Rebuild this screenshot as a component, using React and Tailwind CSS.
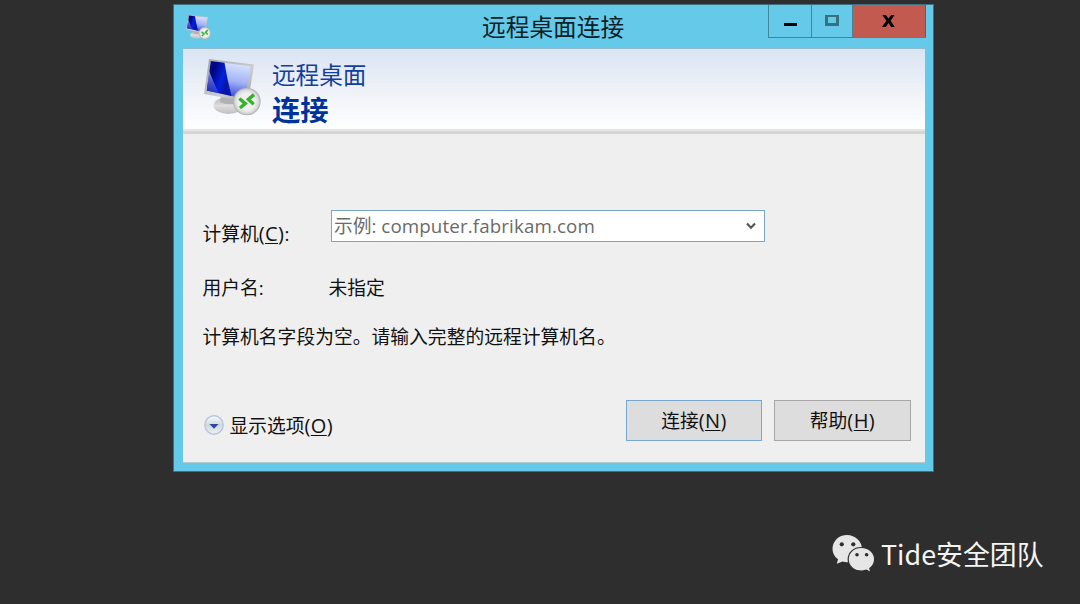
import React from "react";

function ComputerIcon({ className }) {
  return (
    <svg viewBox="0 0 57 57" className={className}>
      <defs>
        <linearGradient id="screenDark" x1="0" y1="0" x2="0.9" y2="0.5">
          <stop offset="0" stopColor="#0a1290" />
          <stop offset="0.35" stopColor="#00047e" />
          <stop offset="0.75" stopColor="#0420e0" />
          <stop offset="1" stopColor="#0616a8" />
        </linearGradient>
        <linearGradient id="screenLight" x1="0.6" y1="0" x2="0.4" y2="1">
          <stop offset="0" stopColor="#dbe5ff" />
          <stop offset="0.5" stopColor="#a3b4f6" />
          <stop offset="1" stopColor="#2536d4" />
        </linearGradient>
        <linearGradient id="glare" x1="0" y1="0" x2="0" y2="1">
          <stop offset="0" stopColor="#aab6f8" stopOpacity="0.8" />
          <stop offset="1" stopColor="#3b4ad8" stopOpacity="0.5" />
        </linearGradient>
        <linearGradient id="frame" x1="0" y1="0" x2="1" y2="1">
          <stop offset="0" stopColor="#a4a6aa" />
          <stop offset="0.6" stopColor="#cdced2" />
          <stop offset="1" stopColor="#8f9195" />
        </linearGradient>
        <linearGradient id="base" x1="0" y1="0" x2="0" y2="1">
          <stop offset="0" stopColor="#b3b3b5" />
          <stop offset="0.5" stopColor="#dededf" />
          <stop offset="1" stopColor="#c0c0c2" />
        </linearGradient>
        <radialGradient id="badge">
          <stop offset="0.6" stopColor="#f0f0f0" />
          <stop offset="0.85" stopColor="#d8d8d8" />
          <stop offset="1" stopColor="#aaaaaa" />
        </radialGradient>
      </defs>
      <ellipse cx="24.5" cy="46.5" rx="15" ry="8.5" fill="url(#base)" />
      <path d="M17 37L31 40L32 44Q24 47 16 43Z" fill="#b0b1b4" />
      <path d="M5 0L50 5.5L44 43L0 35Z" fill="url(#frame)" />
      <path d="M6.8 2L46.6 7.2L41.3 40L2.8 31.5Z" fill="url(#screenLight)" />
      <path d="M6.8 2L20.5 3.8Q23 20 27.5 37L2.8 31.5Z" fill="url(#screenDark)" />
      <path d="M5.2 12Q9 22 14.5 34.1L2.8 31.5Z" fill="url(#glare)" />
      <circle cx="42.8" cy="42.5" r="13.8" fill="url(#badge)" />
      <path
        d="M35.4 39.5L41.2 44.6L36 49M50 35.6L44.4 40.4L49.7 45.2"
        fill="none"
        stroke="#32b526"
        strokeWidth="3.4"
      />
    </svg>
  );
}

function WeChatIcon() {
  return (
    <svg viewBox="0 0 43 38" className="mt-0.5 h-[38px] w-[43px]">
      <g fill="#e6e6e6">
        <path d="M15 0C6.7 0 0.5 6.2 0.5 14C0.5 18.3 2.6 21.7 6 24.2L4.8 28.8L10.5 26.5C12 27 13.5 27.2 15 27.2C23.3 27.2 30 21.5 30 14S23.3 0 15 0Z" />
        <path
          d="M29.2 12.5C21.8 12.5 16.2 17.5 16.2 24.2S21.8 36 29.2 36C31 36 32.7 35.7 34.3 35.1L38.9 37.5L37.8 33.4C40.8 31.2 42.6 28 42.6 24.2C42.6 17.5 36.6 12.5 29.2 12.5Z"
          stroke="#2e2e2e"
          strokeWidth="1.2"
        />
      </g>
      <g fill="#2e2e2e">
        <circle cx="9.8" cy="9.3" r="2.1" />
        <circle cx="21.3" cy="9.3" r="2.1" />
        <circle cx="25" cy="19.7" r="1.8" />
        <circle cx="34.6" cy="19.7" r="1.8" />
      </g>
    </svg>
  );
}

function AccessKey({ letter }) {
  return (
    <span className="text-[20px] tracking-[0.4px]">
      (<u className="underline decoration-1 underline-offset-2">{letter}</u>)
    </span>
  );
}

function TitleBar() {
  return (
    <div className="flex h-11 items-start">
      <div className="flex h-11 w-[308px] shrink-0 pl-3 pt-[9px]">
        <ComputerIcon className="h-[26px] w-[25px]" />
      </div>
      <h1 className="mt-1 w-[286px] shrink-0 whitespace-nowrap text-[23.7px] leading-9 text-[#0c2027]">
        远程桌面连接
      </h1>
      <div className="flex h-[33px] w-[158px] border-b border-l border-[#42869c]">
        <button className="flex w-[43px] items-start justify-center border-r border-[#42869c] pt-[18px]">
          <span className="h-[3px] w-[13px] bg-black" />
        </button>
        <button className="flex w-[41px] items-start justify-center border-r border-[#42869c] pt-[10px]">
          <span className="h-[11px] w-[14px] border-[3px] border-t-2 border-[#36717f]" />
        </button>
        <button className="flex grow items-start justify-center border-r border-[#8a4b4b] bg-[#c35a50] pr-px pt-[10px]">
          <svg viewBox="0 0 13 12" className="h-3 w-[13px]">
            <path d="M0.3 0H3.9L6.5 3.5L9.1 0H12.5L8.6 5.8L12.8 12H9.1L6.5 8L3.8 12H0L4.4 5.8Z" />
          </svg>
        </button>
      </div>
    </div>
  );
}

export default function App() {
  return (
    <main className="flex h-[604px] w-[1080px] flex-col overflow-hidden bg-[#2e2e2e] pl-[173px] pt-1 font-['Open_Sans','Noto_Sans_CJK_SC',sans-serif] text-[18.75px] text-[#111]">
      <section className="flex h-[468px] w-[761px] shrink-0 flex-col border border-[#3d7182] bg-[#65cae9]">
        <TitleBar />
        <div className="ml-[9px] flex h-[414px] w-[742px] flex-col border-b border-[#b5c8ce] bg-[#efefef]">
          <header className="-mt-px flex h-[86px] shrink-0 border-b-[3px] border-t border-b-[#d6d5d3] border-t-[#91b9ca] bg-linear-to-b from-[#dae4f2] via-[#eef2f8] to-white">
            <div className="flex grow border-b-2 border-[#e6e6e5]">
              <ComputerIcon className="ml-[21px] mt-[10px] h-[57px] w-[57px]" />
              <div className="ml-[11px] flex flex-col text-[#123f9f]">
                <p className="mt-[9px] h-[35px] text-[23.6px] leading-[34px]">远程桌面</p>
                <p className="h-[35px] text-[28.3px] font-bold leading-[35px] text-[#003399]">连接</p>
              </div>
            </div>
          </header>

          <div className="flex h-[108px] shrink-0 pl-[19.5px] pt-[76px]">
            <label className="w-[128.5px] shrink-0 pt-[10px] leading-7">
              计算机
              <AccessKey letter="C" />:
            </label>
            <div className="flex h-8 w-[434px] items-center justify-between border border-[#7ba5c1] bg-white pl-[2px] pr-2 text-[#6a6a6a]">
              <span className="leading-7">
                示例: <span className="tracking-[0.12px]">computer.fabrikam.com</span>
              </span>
              <svg viewBox="0 0 10 8" className="h-2 w-[10px]">
                <path d="M1 1.5L5 5.7L9 1.5" fill="none" stroke="#555" strokeWidth="2.2" />
              </svg>
            </div>
          </div>

          <div className="mt-8 flex pl-[19.5px] leading-7">
            <span className="w-[126px]">用户名:</span>
            <span>未指定</span>
          </div>
          <p className="mt-[21px] whitespace-nowrap pl-[19.5px] leading-7 tracking-[0.03px]">
            计算机名字段为空。请输入完整的远程计算机名。
          </p>

          <footer className="mt-[49px] flex pl-[21px]">
            <div className="flex w-[422px] items-start pt-[12px] leading-7">
              <svg viewBox="0 0 20 20" className="mt-[3px] h-5 w-5">
                <defs>
                  <linearGradient id="disc" x1="0" y1="0" x2="0" y2="1">
                    <stop offset="0" stopColor="#fafcfc" />
                    <stop offset="0.5" stopColor="#d0d9d8" />
                    <stop offset="1" stopColor="#eef2f0" />
                  </linearGradient>
                </defs>
                <circle cx="10" cy="10" r="9.2" fill="url(#disc)" stroke="#b9c4e2" strokeWidth="1.4" />
                <path d="M5.4 9H14.6L10 13.7Z" fill="#2947ab" />
              </svg>
              <span className="ml-[5.5px]">
                显示选项
                <AccessKey letter="O" />
              </span>
            </div>
            <button className="h-[41px] w-[136px] border border-[#78a8cf] bg-[#dddddd]">
              连接
              <AccessKey letter="N" />
            </button>
            <button className="ml-3 h-[41px] w-[137px] border border-[#a6a6a6] bg-[#dddddd]">
              帮助
              <AccessKey letter="H" />
            </button>
          </footer>
        </div>
      </section>

      <div className="ml-[659px] mt-[61px] flex h-11 items-start whitespace-nowrap font-['Noto_Sans_CJK_SC',sans-serif] text-[26.9px] leading-[42px] text-[#f5f5f5]">
        <WeChatIcon />
        <span className="ml-[6px]">Tide安全团队</span>
      </div>
    </main>
  );
}
